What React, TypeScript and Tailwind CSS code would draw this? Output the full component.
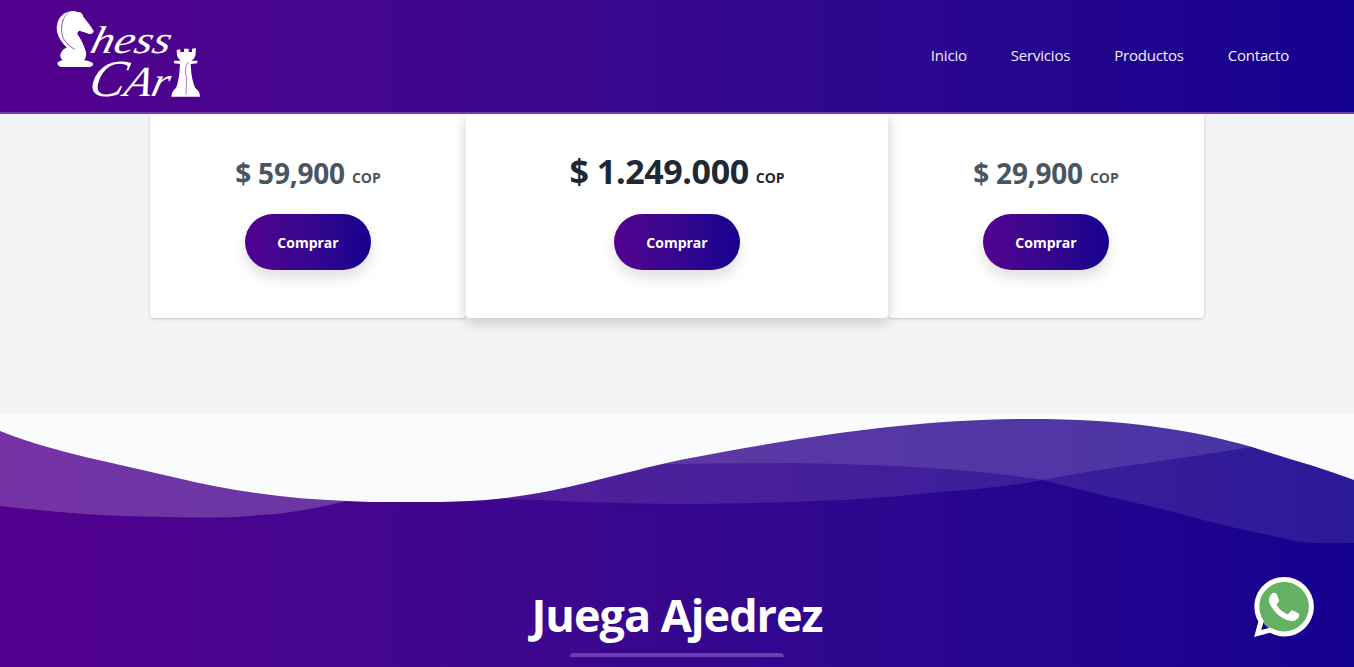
import React from "react";

const navLinks = ["Inicio", "Servicios", "Productos", "Contacto"];

const plans = [
  { price: "$ 59,900", featured: false },
  { price: "$ 1.249.000", featured: true },
  { price: "$ 29,900", featured: false },
];

const Logo = () => (
  <svg viewBox="0 0 540 336" className="w-[180px] h-[112px] block" fill="#fff">
    {/* knight */}
    <path d="M52 190 Q54 184 68 181 Q58 172 62 160 Q68 148 80 142 Q58 122 51 96 Q46 62 70 42 Q88 30 108 34 Q112 38 116 36 Q126 36 130 50 Q148 72 161 92 Q160 102 148 102 Q132 96 118 92 Q112 94 112 102 Q128 124 138 156 Q140 172 132 181 Q156 184 160 192 Q158 201 146 201 L66 201 Q54 201 52 190 Z" />
    <path d="M69 60 Q60 90 70 116 Q82 138 104 148" fill="none" stroke="#53008e" strokeWidth="2" />
    <path d="M86 36 Q72 48 68 64" fill="none" stroke="#53008e" strokeWidth="1.5" />
    {/* rook */}
    <path d="M410 150 L421 148 L421 156 L432 156 L432 146 L446 146 L446 156 L456 156 L456 146 L468 145 L466 168 Q462 178 454 182 L472 182 L472 190 L452 192 Q454 240 466 264 Q480 274 480 290 L394 290 Q396 272 408 264 Q418 240 420 192 L402 190 L402 182 L422 182 Q412 174 411 166 Z" />
    <path d="M444 186 Q430 210 440 232 L438 284" fill="none" stroke="#53008e" strokeWidth="1.5" />
    {/* wordmark */}
    <text transform="translate(146 160) skewX(-14)" fontFamily="'Liberation Serif', serif" fontStyle="italic" fontSize="116" textLength="240" lengthAdjust="spacingAndGlyphs">
      hess
    </text>
    <text transform="translate(140 288) skewX(-14)" fontFamily="'Liberation Serif', serif" fontStyle="italic" fontSize="128" textLength="240" lengthAdjust="spacingAndGlyphs">
      <tspan fontSize="156">C</tspan>Ar
    </text>
  </svg>
);

const Waves = () => (
  <svg viewBox="0 0 1354 130" className="block w-full h-[130px]">
    {/* coordinates: page y minus 415, top fill goes last and trims the layers */}
    <path d="M0 0 H347 V86 C320 92 290 99 260 100 C230 103 200 103 173 102 C110 102 50 97 0 91 Z" fill="#fff" fillOpacity="0.2" />
    <path d="M640 0 H1252 V32 C1180 44 1110 52 1043 65 C920 46 760 47 640 50 Z" fill="#fff" fillOpacity="0.2" />
    <path d="M505 84 L640 30 V50 C760 47 920 46 1043 65 C1010 71 975 75 938 77 C880 84 810 88 680 89 C620 89 560 86 505 84 Z" fill="#fff" fillOpacity="0.1" />
    <path d="M1043 65 C1110 52 1180 44 1252 32 V0 H1354 V128 C1330 128 1305 130 1282 123 C1250 116 1220 110 1196 103 C1140 88 1090 78 1043 65 Z" fill="#fff" fillOpacity="0.1" />
    <path d="M0 0 H1354 V65 C1320 52 1285 43 1252 32 C1190 14 1120 4 1030 4 C920 4 810 20 680 45 C620 58 570 74 520 81 C480 87 440 87 403 87 C380 87 360 87 347 86 C290 84 235 77 173 62 C115 48 55 38 0 16 Z" fill="#f9fbfd" />
  </svg>
);

const WhatsappButton = () => (
  <div className="fixed right-[40px] bottom-[30px] w-[60px] h-[60px]">
    <svg viewBox="0 0 24 24" className="w-full h-full">
      <circle cx="12" cy="12" r="10.5" fill="#65b163" />
      <path
        fill="#fff"
        d="M17.472 14.382c-.297-.149-1.758-.867-2.03-.967-.273-.099-.471-.148-.67.15-.197.297-.767.966-.94 1.164-.173.199-.347.223-.644.075-.297-.15-1.255-.463-2.39-1.475-.883-.788-1.48-1.761-1.653-2.059-.173-.297-.018-.458.13-.606.134-.133.298-.347.446-.52.149-.174.198-.298.298-.497.099-.198.05-.371-.025-.52-.075-.149-.669-1.612-.916-2.207-.242-.579-.487-.5-.669-.51-.173-.008-.371-.01-.57-.01-.198 0-.52.074-.792.372-.272.297-1.04 1.016-1.04 2.479 0 1.462 1.065 2.875 1.213 3.074.149.198 2.096 3.2 5.077 4.487.709.306 1.262.489 1.694.625.712.227 1.36.195 1.871.118.571-.085 1.758-.719 2.006-1.413.248-.694.248-1.289.173-1.413-.074-.124-.272-.198-.57-.347m-5.421 7.403h-.004a9.87 9.87 0 01-5.031-1.378l-.361-.214-3.741.982.998-3.648-.235-.374a9.86 9.86 0 01-1.51-5.26c.001-5.45 4.436-9.884 9.888-9.884 2.64 0 5.122 1.03 6.988 2.898a9.825 9.825 0 012.893 6.994c-.003 5.45-4.437 9.884-9.885 9.884m8.413-18.297A11.815 11.815 0 0012.05 0C5.495 0 .16 5.335.157 11.892c0 2.096.547 4.142 1.588 5.945L.057 24l6.305-1.654a11.882 11.882 0 005.683 1.448h.005c6.554 0 11.89-5.335 11.893-11.893a11.821 11.821 0 00-3.48-8.413Z"
      />
    </svg>
  </div>
);

export default function App() {
  return (
    <div className="h-screen overflow-hidden flex flex-col bg-[#f3f4f6] font-['Open_Sans',sans-serif]">
      {/* Header */}
      <header className="relative z-20 h-[114px] shrink-0 flex items-center justify-between pl-[40px] pr-[65px] border-b-2 border-[#6f3cb4] bg-gradient-to-r from-[#53008e] to-[#14008e]">
        <Logo />
        <nav className="flex gap-[44px] mb-[2px] text-[15px] text-[#f1f0fa] tracking-[-0.2px]">
          {navLinks.map((link) => (
            <a key={link} href="#">
              {link}
            </a>
          ))}
        </nav>
      </header>

      {/* Pricing cards */}
      <section className="h-[301px] shrink-0">
        <div className="mx-auto w-[1054px] flex">
          {plans.map((plan) => (
            <div
              key={plan.price}
              className={`h-[204px] flex flex-col items-center pt-[37px] bg-white rounded-b ${
                plan.featured
                  ? "w-[422px] relative z-10 shadow-[0_4px_14px_rgba(0,0,0,0.2)]"
                  : "w-[316px] shadow-[0_1px_3px_rgba(0,0,0,0.2)]"
              }`}
            >
              <div className={`h-[41px] flex items-baseline font-bold ${plan.featured ? "text-[#1f2933]" : "text-[#4a5560]"}`}>
                <span className={plan.featured ? "text-[34px] leading-[40px] tracking-[-0.4px]" : "text-[28px] leading-[44px] tracking-[-0.2px]"}>
                  {plan.price}
                </span>
                <span className="ml-[7px] text-[14px] -translate-y-[1px]">COP</span>
              </div>
              <a
                href="#"
                className="mt-[22px] w-[126px] h-[56px] flex items-center justify-center rounded-full bg-gradient-to-r from-[#53008e] to-[#14008e] text-white text-[14px] font-bold shadow-[0_8px_14px_rgba(0,0,0,0.12)]"
              >
                Comprar
              </a>
            </div>
          ))}
        </div>
      </section>

      {/* Wave section */}
      <section className="flex-1 bg-gradient-to-r from-[#53008e] to-[#14008e] overflow-hidden">
        <Waves />
        <div className="flex flex-col items-center pt-[42px]">
          <h2 className="text-[45px] leading-[56px] font-bold text-white tracking-[-1px]">Juega Ajedrez</h2>
          <div className="mt-[10px] w-[214px] h-[4px] rounded-t bg-[#6a3fb0]" />
        </div>
      </section>

      <WhatsappButton />
    </div>
  );
}
